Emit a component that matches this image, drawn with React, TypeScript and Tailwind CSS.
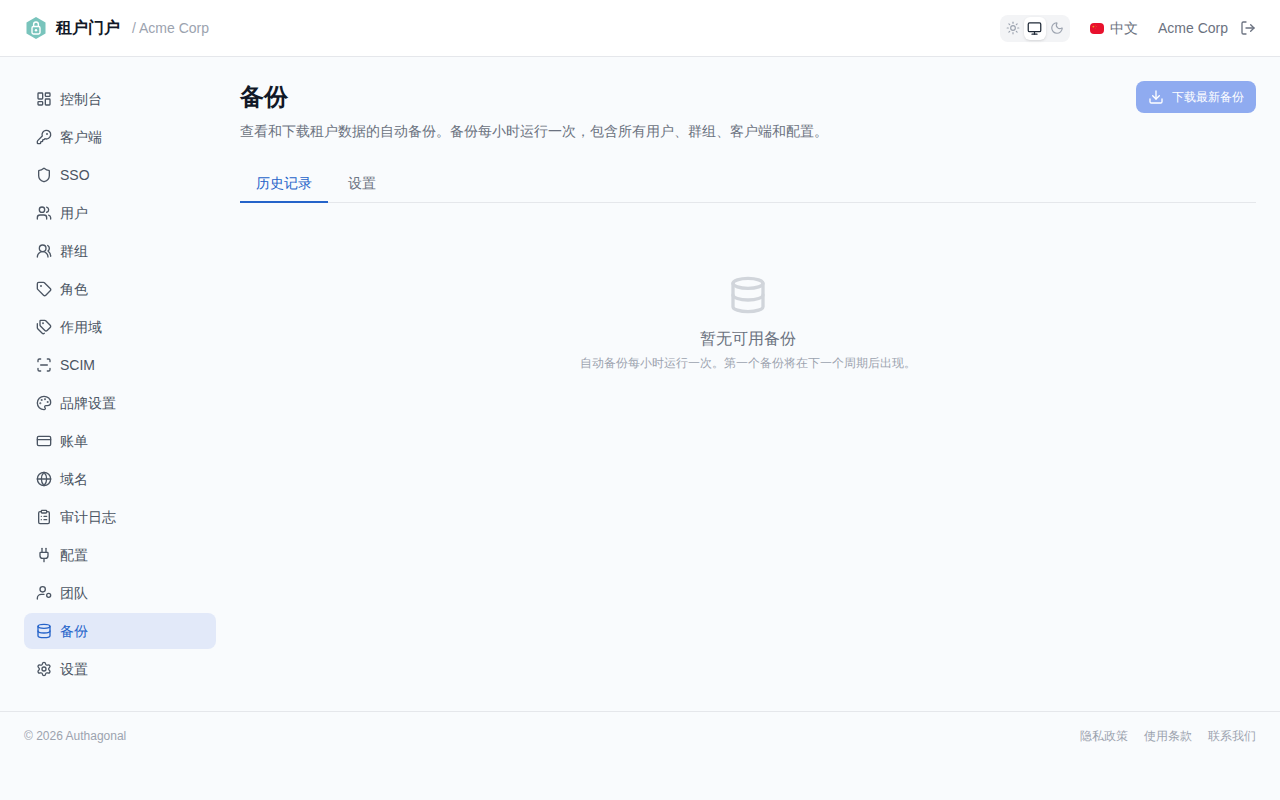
import {
  ClipboardList,
  CreditCard,
  Database,
  Download,
  Globe,
  KeyRound,
  LayoutDashboard,
  LogOut,
  Monitor,
  Moon,
  Palette,
  Plug,
  ScanLine,
  Settings,
  Shield,
  Sun,
  Tag,
  Tags,
  Users,
  UsersRound,
} from "lucide-react";

// small user + ring icon used on the team row
const TeamIcon = ({ size = 16 }: { size?: number }) => (
  <svg
    width={size}
    height={size}
    viewBox="0 0 24 24"
    fill="none"
    stroke="currentColor"
    strokeWidth="2"
    strokeLinecap="round"
    strokeLinejoin="round"
  >
    <circle cx="10" cy="6.5" r="4" />
    <path d="M2 21v-1a6 6 0 0 1 6-6h4" />
    <circle cx="19" cy="15.5" r="3" />
  </svg>
);

const nav = [
  { label: "控制台", icon: LayoutDashboard },
  { label: "客户端", icon: KeyRound },
  { label: "SSO", icon: Shield },
  { label: "用户", icon: Users },
  { label: "群组", icon: UsersRound },
  { label: "角色", icon: Tag },
  { label: "作用域", icon: Tags },
  { label: "SCIM", icon: ScanLine },
  { label: "品牌设置", icon: Palette },
  { label: "账单", icon: CreditCard },
  { label: "域名", icon: Globe },
  { label: "审计日志", icon: ClipboardList },
  { label: "配置", icon: Plug },
  { label: "团队", icon: TeamIcon },
  { label: "备份", icon: Database, active: true },
  { label: "设置", icon: Settings },
];

const Logo = () => (
  <svg width="24" height="24" viewBox="0 0 24 24" fill="none">
    <path d="M12 1 L21.5 6.5 V17.5 L12 23 L2.5 17.5 V6.5 Z" fill="#79c4bc" />
    <rect x="8" y="10.5" width="8" height="7.5" rx="1.4" stroke="#fff" strokeWidth="1.4" />
    <path d="M9.6 10.5 V8.4 a2.4 2.4 0 0 1 4.8 0 V10.5" stroke="#fff" strokeWidth="1.4" />
    <circle cx="12" cy="14.2" r="1.2" fill="#fff" />
  </svg>
);

const Flag = () => (
  <svg width="14" height="11" viewBox="0 0 14 11" className="rounded-[4px]">
    <rect width="14" height="11" fill="#e8112d" />
    <circle cx="3.4" cy="3.6" r="0.9" fill="#f0a020" />
    <circle cx="5.6" cy="2" r="0.3" fill="#f0a020" />
    <circle cx="6.2" cy="3.4" r="0.3" fill="#f0a020" />
    <circle cx="5.6" cy="5" r="0.3" fill="#f0a020" />
  </svg>
);

export default function App() {
  return (
    <div className="min-h-[800px] bg-[#f9fbfd] font-['Liberation_Sans',sans-serif] flex flex-col">
      <header className="h-[57px] bg-white border-b border-[#e5e7eb] px-6 flex items-center justify-between">
        <div className="flex items-center">
          <Logo />
          <span className="ml-2 text-base font-semibold text-[#111827]">租户门户</span>
          <span className="ml-3 text-sm text-[#9ca3af]">/ Acme Corp</span>
        </div>
        <div className="flex items-center">
          <div className="flex items-center bg-[#f3f4f6] rounded-lg p-0.5 h-[27px]">
            <span className="w-[22px] h-[23px] flex items-center justify-center text-[#9ca3af]">
              <Sun size={14} />
            </span>
            <span className="w-[22px] h-[23px] flex items-center justify-center bg-white rounded-md shadow-sm text-[#1f2937]">
              <Monitor size={15} />
            </span>
            <span className="w-[22px] h-[23px] flex items-center justify-center text-[#9ca3af]">
              <Moon size={14} />
            </span>
          </div>
          <div className="ml-5 flex items-center gap-1.5 text-sm text-[#6b7280]">
            <Flag />
            <span>中文</span>
          </div>
          <span className="ml-5 text-sm text-[#6b7280]">Acme Corp</span>
          <LogOut size={16} className="ml-3 text-[#6b7280]" />
        </div>
      </header>

      <div className="flex flex-1 px-6 pt-6">
        <aside className="w-48 shrink-0 flex flex-col gap-0.5">
          {nav.map((item) => {
            const Icon = item.icon;
            return (
              <div
                key={item.label}
                className={
                  item.active
                    ? "h-9 px-3 rounded-lg flex items-center gap-2 text-sm bg-[#e2e9f9] text-[#2563c9]"
                    : "h-9 px-3 rounded-lg flex items-center gap-2 text-sm text-[#4b5563]"
                }
              >
                <Icon size={16} />
                <span>{item.label}</span>
              </div>
            );
          })}
        </aside>

        <main className="flex-1 ml-6 min-w-0">
          <div className="flex items-start justify-between">
            <div>
              <h1 className="text-2xl font-bold text-[#111827]">备份</h1>
              <p className="mt-2 text-sm text-[#6b7280]">
                查看和下载租户数据的自动备份。备份每小时运行一次，包含所有用户、群组、客户端和配置。
              </p>
            </div>
            <button className="h-8 px-3 rounded-lg flex items-center gap-2 bg-[#8fabf0] text-white text-xs">
              <Download size={16} />
              <span>下载最新备份</span>
            </button>
          </div>

          <div className="mt-[22px] flex border-b border-[#e5e7eb] h-[40px]">
            <div className="h-[40px] px-4 flex items-center text-sm text-[#2563c9] border-y-2 border-t-transparent border-b-[#2563c9]">
              历史记录
            </div>
            <div className="h-[40px] px-5 flex items-center text-sm text-[#6b7280]">设置</div>
          </div>

          <div className="pt-[72px] flex flex-col items-center">
            <Database size={40} className="text-[#d1d5db]" />
            <p className="mt-3 text-base text-[#6b7280]">暂无可用备份</p>
            <p className="mt-1 text-xs text-[#9ca3af]">
              自动备份每小时运行一次。第一个备份将在下一个周期后出现。
            </p>
          </div>
        </main>
      </div>

      <footer className="mt-[12px] h-[89px] border-t border-[#e5e7eb] px-6 pt-4 flex justify-between text-xs text-[#9ca3af]">
        <span>© 2026 Authagonal</span>
        <div className="flex gap-4">
          <span>隐私政策</span>
          <span>使用条款</span>
          <span>联系我们</span>
        </div>
      </footer>
    </div>
  );
}
